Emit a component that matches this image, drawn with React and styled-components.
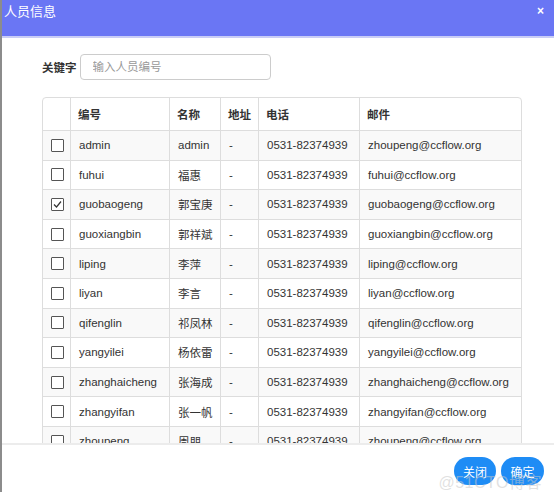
import React from "react";
import styled, { createGlobalStyle } from "styled-components";

const people = [
  { no: "admin", name: "admin", mail: "zhoupeng" },
  { no: "fuhui", name: "福惠" },
  { no: "guobaogeng", name: "郭宝庚", checked: true },
  { no: "guoxiangbin", name: "郭祥斌" },
  { no: "liping", name: "李萍" },
  { no: "liyan", name: "李言" },
  { no: "qifenglin", name: "祁凤林" },
  { no: "yangyilei", name: "杨依雷" },
  { no: "zhanghaicheng", name: "张海成" },
  { no: "zhangyifan", name: "张一帆" },
  { no: "zhoupeng", name: "周朋" },
];

const GlobalStyle = createGlobalStyle`
  html, body {
    margin: 0;
    padding: 0;
    background: #fff;
  }
  body {
    font-family: "Liberation Sans", Arial, "Noto Sans CJK SC", sans-serif;
    font-size: 11.5px;
    color: #333;
  }
`;

const Dialog = styled.div`
  width: 554px;
  height: 492px;
  border-left: 2px solid #8c8c8c;
  box-sizing: border-box;
  display: flex;
  flex-direction: column;
  background: #fff;
`;

const TitleBar = styled.div`
  height: 38px;
  flex: none;
  background: #6a76f4;
  border-bottom: 2px solid #c9cdf6;
  display: flex;
  justify-content: space-between;
  padding: 4px 10px 0 2px;
  box-sizing: border-box;
  color: #fff;
`;

const Title = styled.div`
  font-size: 13px;
  line-height: 16px;
`;

const Close = styled.div`
  font-size: 12px;
  line-height: 14px;
  font-weight: bold;
`;

const Body = styled.div`
  height: 405px;
  flex: none;
  overflow-y: scroll;
  margin-right: 3px;
  &::-webkit-scrollbar {
    width: 13px;
  }
  &::-webkit-scrollbar-track {
    background: #f1f1f1;
  }
  &::-webkit-scrollbar-thumb {
    background: #c8c8c8;
  }
  &::-webkit-scrollbar-button:single-button {
    background-color: #f1f1f1;
    height: 16px;
    display: block;
  }
`;

const Content = styled.div`
  padding: 16px 17px 0 40px;
`;

const SearchRow = styled.div`
  display: flex;
  align-items: center;
  gap: 3px;
  margin-bottom: 17px;
`;

const Label = styled.label`
  font-weight: bold;
  color: #333;
`;

const Input = styled.input`
  width: 191px;
  height: 26px;
  box-sizing: border-box;
  border: 1px solid #ccc;
  border-radius: 4px;
  padding: 0 12px;
  font-family: inherit;
  font-size: 11.5px;
  color: #555;
  outline: none;
  &::placeholder {
    color: #999;
  }
`;

const Table = styled.table`
  width: 480px;
  border-collapse: separate;
  border-spacing: 0;
  border: 1px solid #ddd;
  border-radius: 4px;
  table-layout: fixed;
`;

const Th = styled.th`
  text-align: left;
  font-weight: bold;
  height: 32px;
  padding: 0 7px;
  white-space: nowrap;
  border-left: 1px solid #ddd;
  border-bottom: 1px solid #ddd;
  &:first-child {
    border-left: none;
  }
`;

const Tr = styled.tr`
  background: ${(p) => (p.$striped ? "#f9f9f9" : "#fff")};
`;

const Td = styled.td`
  height: 28.6px;
  padding: 0 7px 0 8px;
  border-left: 1px solid #ddd;
  border-top: 1px solid #ddd;
  white-space: nowrap;
  overflow: hidden;
  &:first-child {
    border-left: none;
  }
  tr:first-child > & {
    border-top: none;
  }
`;

const Check = styled.span`
  display: block;
  width: 11px;
  height: 11px;
  border: 1px solid #555;
  border-radius: 1px;
  background: #fff;
  position: relative;
`;

const Footer = styled.div`
  flex: 1;
  border-top: 2px solid #ececec;
  display: flex;
  justify-content: flex-end;
  align-items: flex-start;
  gap: 5px;
  padding: 12px 10px 0 0;
  position: relative;
`;

const Button = styled.button`
  width: ${(p) => p.$w}px;
  height: 28px;
  border: none;
  border-radius: 14px;
  background: #1e8cf5;
  color: #fff;
  font-family: inherit;
  font-size: 12px;
  padding: 0;
`;

const Watermark = styled.div`
  position: absolute;
  right: 12px;
  top: 24px;
  font-size: 16px;
  color: rgba(200, 200, 200, 0.55);
  pointer-events: none;
  letter-spacing: 0.5px;
`;

const Tick = () => (
  <svg width="11" height="11" viewBox="0 0 11 11" style={{ position: "absolute", left: 0, top: 0 }}>
    <path d="M2 5.5 L4.5 8 L9 2.5" fill="none" stroke="#333" strokeWidth="1.2" />
  </svg>
);

const App = () => {
  return (
    <>
      <GlobalStyle />
      <Dialog>
        <TitleBar>
          <Title>人员信息</Title>
          <Close>×</Close>
        </TitleBar>
        <Body>
          <Content>
            <SearchRow>
              <Label>关键字</Label>
              <Input placeholder="输入人员编号" />
            </SearchRow>
            <Table>
              <colgroup>
                <col style={{ width: 27 }} />
                <col style={{ width: 99 }} />
                <col style={{ width: 51 }} />
                <col style={{ width: 38 }} />
                <col style={{ width: 101 }} />
                <col />
              </colgroup>
              <thead>
                <tr>
                  <Th></Th>
                  <Th>编号</Th>
                  <Th>名称</Th>
                  <Th>地址</Th>
                  <Th>电话</Th>
                  <Th>邮件</Th>
                </tr>
              </thead>
              <tbody>
                {people.map((p, i) => (
                  <Tr key={p.no} $striped={i % 2 === 0}>
                    <Td>
                      <Check>{p.checked && <Tick />}</Check>
                    </Td>
                    <Td>{p.no}</Td>
                    <Td>{p.name}</Td>
                    <Td>-</Td>
                    <Td>0531-82374939</Td>
                    <Td>{p.mail || p.no}@ccflow.org</Td>
                  </Tr>
                ))}
              </tbody>
            </Table>
          </Content>
        </Body>
        <Footer>
          <Button $w={42}>关闭</Button>
          <Button $w={43}>确定</Button>
          <Watermark>@51CTO博客</Watermark>
        </Footer>
      </Dialog>
    </>
  );
};

export default App;
